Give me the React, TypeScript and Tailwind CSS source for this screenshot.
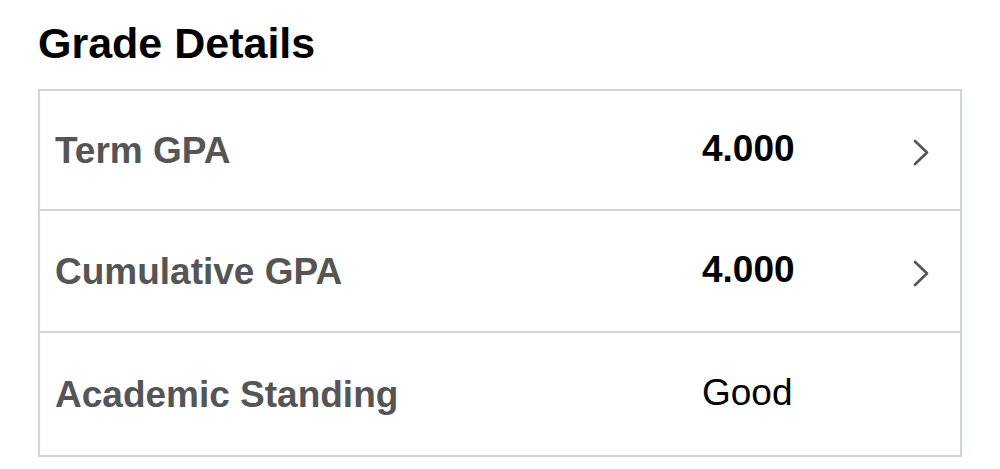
import React from "react";

function Chevron() {
  return (
    <svg width="16" height="27" viewBox="0 0 16 27" fill="none" className="block">
      <path d="M2 2 L14 13.5 L2 25" stroke="#555555" strokeWidth="2.6" strokeLinecap="round" strokeLinejoin="round" />
    </svg>
  );
}

type Row = { label: string; value: string; bold: boolean; chevron: boolean; h: string };

const rows: Row[] = [
  { label: "Term GPA", value: "4.000", bold: true, chevron: true, h: "h-[120px]" },
  { label: "Cumulative GPA", value: "4.000", bold: true, chevron: true, h: "h-[122px]" },
  { label: "Academic Standing", value: "Good", bold: false, chevron: false, h: "h-[122px]" },
];

export default function App() {
  return (
    <div className="w-[1000px] h-[469px] bg-white overflow-hidden font-['Liberation_Sans',Arial,sans-serif]">
      <div className="pl-[38px] pr-[38px] pt-[19px]">
        <h1 className="text-[43px] leading-[48px] font-bold text-black">Grade Details</h1>
        <div className="mt-[22px] border-2 border-[#d1d6d9] divide-y-2 divide-[#d1d6d9]">
          {rows.map((r) => (
            <div
              key={r.label}
              className={
                r.h === "h-[120px]"
                  ? "h-[120px] grid grid-cols-[1fr_211px_16px] items-center pl-[15px] pr-[31px]"
                  : "h-[122px] grid grid-cols-[1fr_211px_16px] items-center pl-[15px] pr-[31px]"
              }
            >
              <div className="text-[37px] font-bold text-[#555555] leading-none">{r.label}</div>
              <div
                className={
                  r.bold
                    ? "text-[37px] font-bold text-black leading-none -mt-[3px]"
                    : "text-[37px] font-normal text-black leading-none -mt-[3px]"
                }
              >
                {r.value}
              </div>
              <div className="mt-[4px]">{r.chevron ? <Chevron /> : null}</div>
            </div>
          ))}
        </div>
      </div>
    </div>
  );
}
